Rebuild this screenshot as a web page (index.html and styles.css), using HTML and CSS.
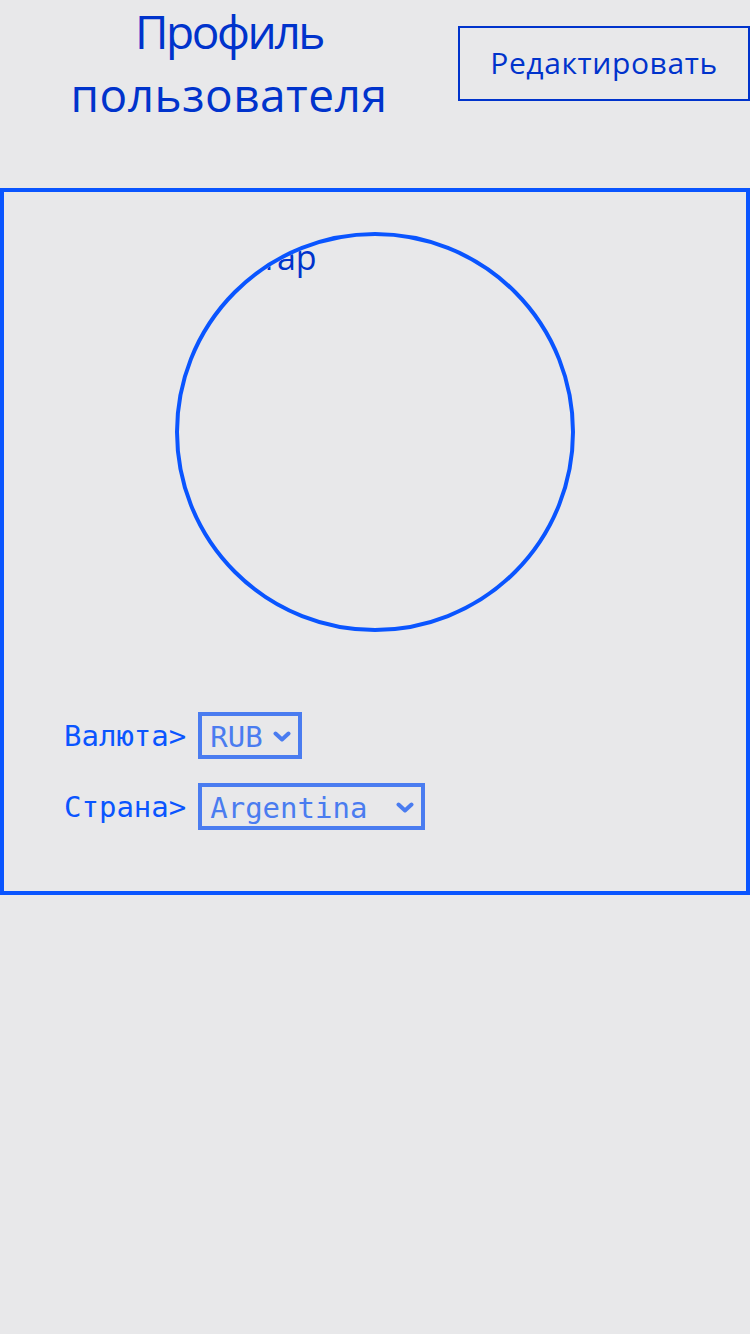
FILE: index.html
```html
<!DOCTYPE html>
<html lang="ru">
<head>
<meta charset="utf-8">
<title>Профиль пользователя</title>
<link rel="stylesheet" href="styles.css">
</head>
<body>
<header class="header">
  <h1 class="title"><span class="title-word1">Профиль</span> <span class="title-word2">пользователя</span></h1>
  <button class="edit-btn" type="button">Редактировать</button>
</header>
<main class="card">
  <div class="avatar"><span class="avatar-alt">Аватар</span></div>
  <form class="form">
    <label class="row"><span class="label">Валюта&gt;</span>
      <span class="select-wrap select-currency">
        <select class="select"><option>RUB</option><option>USD</option><option>EUR</option></select>
        <svg class="chevron" viewBox="0 0 18 11" width="18" height="11" aria-hidden="true"><path d="M2.5 2.5 L9 8.5 L15.5 2.5" fill="none" stroke="currentColor" stroke-width="4" stroke-linecap="round" stroke-linejoin="round"/></svg>
      </span>
    </label>
    <label class="row"><span class="label">Страна&gt;</span>
      <span class="select-wrap select-country">
        <select class="select"><option>Argentina</option><option>Russia</option><option>Kazakhstan</option></select>
        <svg class="chevron" viewBox="0 0 18 11" width="18" height="11" aria-hidden="true"><path d="M2.5 2.5 L9 8.5 L15.5 2.5" fill="none" stroke="currentColor" stroke-width="4" stroke-linecap="round" stroke-linejoin="round"/></svg>
      </span>
    </label>
  </form>
</main>
</body>
</html>
```
FILE: styles.css
```css
* { box-sizing: border-box; }
html, body { margin: 0; padding: 0; }
body {
  background: #e8e8ea;
  width: 750px;
  min-height: 1334px;
  font-family: "Open Sans", "Noto Sans", sans-serif;
  color: #0033cc;
}
.header {
  display: flex;
  align-items: flex-start;
  height: 188px;
}
.title {
  flex: 1;
  margin: 0;
  text-align: center;
  font-weight: 400;
  font-size: 46px;
  line-height: 63px;
  color: #0033cc;
}
.title-word1 { letter-spacing: -2.4px; }
.title-word2 { letter-spacing: 0.5px; }
.edit-btn {
  margin-top: 26px;
  width: 292px;
  height: 75px;
  border: 2px solid #0033cc;
  background: transparent;
  color: #0033cc;
  font-family: "Open Sans", "Noto Sans", sans-serif;
  font-size: 30px;
  letter-spacing: 0.6px;
  padding: 0 0 2px;
}
.card {
  border: 4px solid #0a55ff;
  height: 707px;
  padding-top: 40px;
}
.avatar {
  width: 400px;
  height: 400px;
  margin: 0 auto;
  border: 4px solid #0a55ff;
  border-radius: 50%;
  overflow: hidden;
  padding: 1px 0 0 22px;
}
.avatar-alt {
  display: block;
  font-size: 34px;
  line-height: 40px;
  color: #0033cc;
}
.form {
  margin-top: 80px;
  padding-left: 60px;
  display: flex;
  flex-direction: column;
  gap: 24px;
}
.row {
  display: flex;
  align-items: center;
  gap: 12px;
}
.label {
  font-family: "DejaVu Sans Mono", monospace;
  font-size: 29px;
  color: #0a55ff;
}
.select-wrap {
  position: relative;
  display: block;
  color: #4a7cf0;
}
.select-currency { width: 104px; }
.select-country { width: 227px; }
.select {
  display: block;
  width: 100%;
  height: 47px;
  -webkit-appearance: none;
  appearance: none;
  border: 4px solid #4a7cf0;
  border-radius: 0;
  background: transparent;
  color: #4a7cf0;
  font-family: "DejaVu Sans Mono", monospace;
  font-size: 29px;
  padding: 3px 0 0 8px;
  margin: 0;
  outline: none;
}
.chevron {
  position: absolute;
  right: 11px;
  top: 19px;
  pointer-events: none;
}
```
